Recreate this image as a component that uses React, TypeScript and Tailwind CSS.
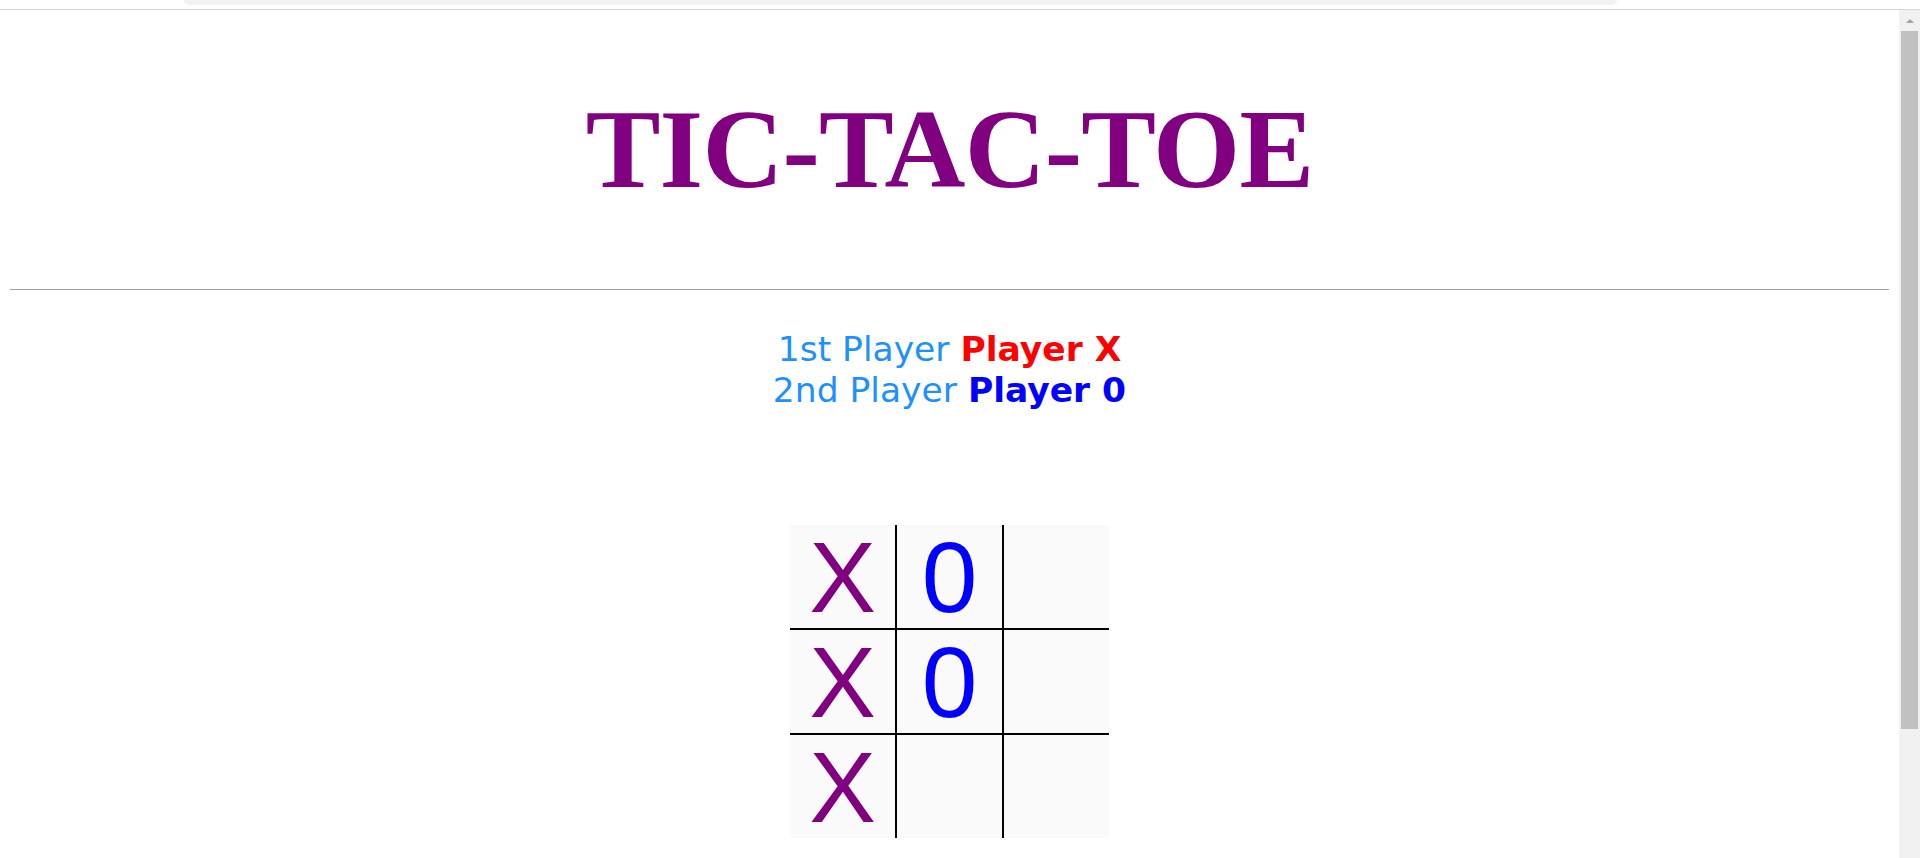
import React from 'react';

const board = [
  ['X', '0', ''],
  ['X', '0', ''],
  ['X', '', ''],
];

function Cell({ value }: { value: string }) {
  return (
    <div className="flex h-[103px] items-center justify-center bg-[#fafafa]">
      {value === 'X' && <span className="text-[#800080]">X</span>}
      {value === '0' && <span className="text-[#0000ff]">0</span>}
    </div>
  );
}

export default function App() {
  return (
    <div className="flex h-screen w-full flex-col overflow-hidden bg-white">
      {/* browser chrome leftover */}
      <div className="relative h-[10px] w-full border-b border-[#d6d6d6]">
        <div className="absolute left-[184px] top-0 h-[5px] w-[1433px] rounded-b-[8px] bg-[#f1f2f4]" />
      </div>

      <div className="flex flex-1 overflow-hidden">
        <main className="flex flex-1 flex-col px-[10px]">
          <h1 className="mt-[83px] text-center font-['Liberation_Serif','Times_New_Roman',serif] text-[112px] leading-[112px] font-bold tracking-[-0.8px] text-[#800080]">
            TIC-TAC-TOE
          </h1>

          <hr className="mt-[84px] border-0 border-t border-[#a0a0a0]" />

          <div className="mt-[39px] text-center font-['DejaVu_Sans',Verdana,sans-serif] text-[34.5px] leading-[41px] text-[#1e90ff]">
            <div>
              1st Player <b className="text-[#ff0000]">Player X</b>
            </div>
            <div>
              2nd Player <b className="text-[#0000ff]">Player 0</b>
            </div>
          </div>

          <div className="mt-[114px] flex justify-center">
            <div className="grid w-[319px] grid-cols-3 gap-[2px] bg-black font-['Liberation_Sans',Arial,sans-serif] text-[100px] leading-none">
              {board.flat().map((v, i) => (
                <Cell key={i} value={v} />
              ))}
            </div>
          </div>
        </main>

        {/* scrollbar */}
        <div className="flex w-[21px] flex-col items-center bg-[#f1f1f1]">
          <div className="mt-[9px] h-0 w-0 border-x-[4px] border-b-[4px] border-x-transparent border-b-[#a3a3a3]" />
          <div className="mt-[8px] h-[698px] w-[17px] bg-[#c1c1c1]" />
        </div>
      </div>
    </div>
  );
}
